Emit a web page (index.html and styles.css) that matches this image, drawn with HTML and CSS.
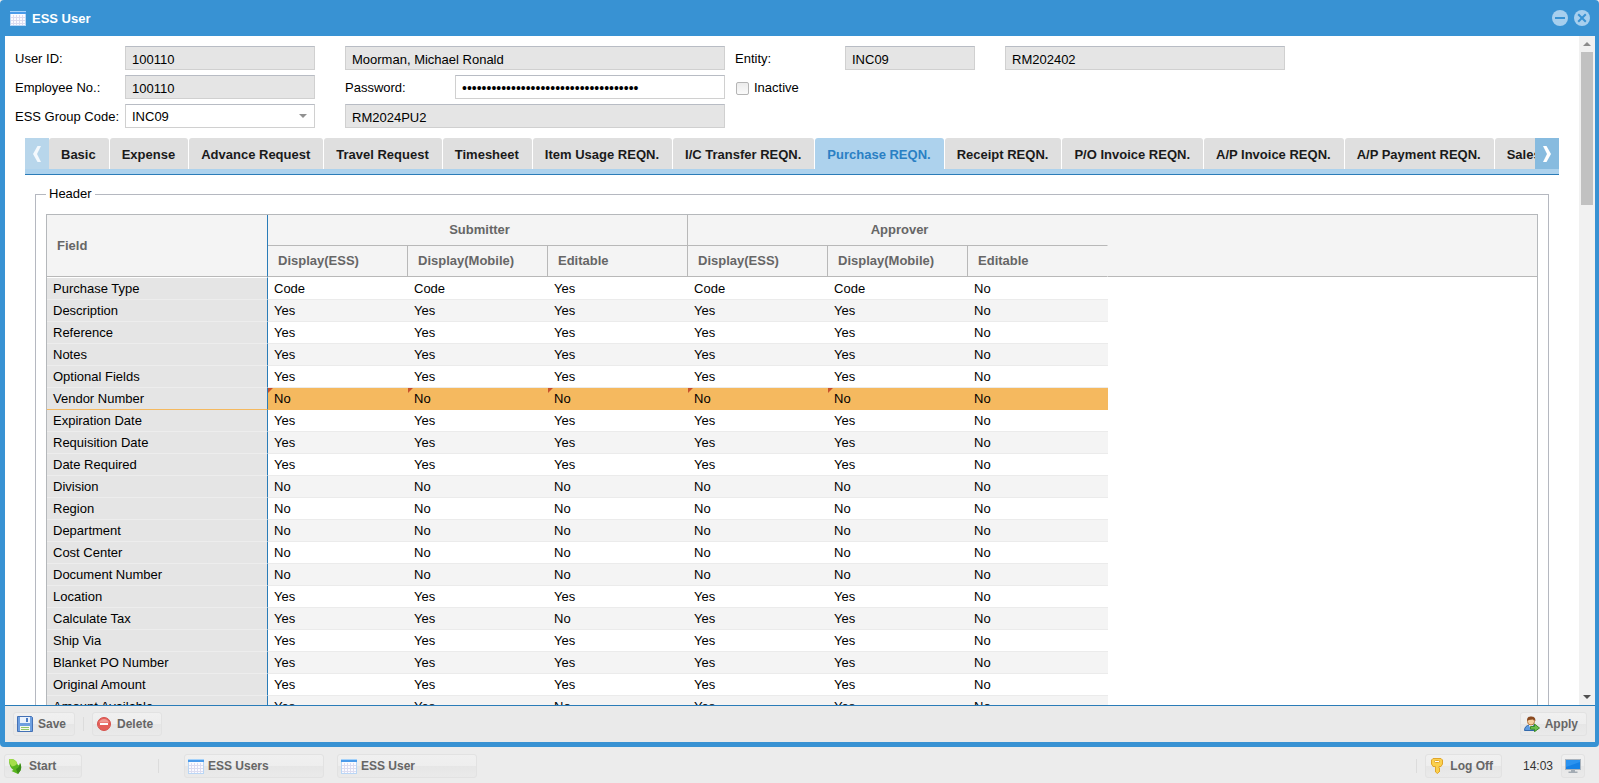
FILE: index.html
```html
<!DOCTYPE html>
<html lang="en">
<head>
    <meta charset="UTF-8">
    <meta name="viewport" content="width=device-width, initial-scale=1.0">
    <title>ESS User</title>
    <link rel="stylesheet" href="styles.css">
</head>
<body>

    <!-- Shared icons -->
    <svg class="sprite" aria-hidden="true">
        <symbol id="icon-grid" viewBox="0 0 16 16">
            <rect x="0.5" y="2.5" width="15" height="13" fill="#fbfbff" stroke="#b9d6f5"/>
            <path d="M3.500 5v10M6.500 5v10M9.500 5v10M12.500 5v10M1 7.500h14M1 10.500h14M1 13.500h14" stroke="#dcdcf0" fill="none"/>
            <rect x="0" y="1" width="16" height="3" fill="#4a9bea"/>
            <rect x="0" y="1" width="16" height="1" fill="#a5d2fa"/>
        </symbol>
    </svg>

    <main class="window">
        <header class="window-header">
            <svg class="icon"><use href="#icon-grid"/></svg>
            <h1>ESS User</h1>
            <button class="tool" aria-label="Minimize">
                <svg class="icon" viewBox="0 0 16 16"><circle cx="8" cy="8" r="8" fill="#a7cfee"/><path d="M3 8h10" stroke="#3892d3" stroke-width="2"/></svg>
            </button>
            <button class="tool" aria-label="Close">
                <svg class="icon" viewBox="0 0 16 16"><circle cx="8" cy="8" r="8" fill="#a7cfee"/><path d="M4.200 4.200l7.600 7.600M11.800 4.200l-7.600 7.600" stroke="#3892d3" stroke-width="2"/></svg>
            </button>
        </header>

        <div class="window-body">
            <div class="content">
                <form class="user-form">
                    <div class="form-row">
                        <label for="user-id">User ID:</label>
                        <input class="code" id="user-id" type="text" value="100110" readonly>
                        <input class="name spaced" type="text" value="Moorman, Michael Ronald" aria-label="User name" readonly>
                        <label class="third" for="entity">Entity:</label>
                        <input class="entity" id="entity" type="text" value="INC09" readonly>
                        <input class="entity-name spaced" type="text" value="RM202402" aria-label="Entity name" readonly>
                    </div>
                    <div class="form-row">
                        <label for="employee-no">Employee No.:</label>
                        <input class="code" id="employee-no" type="text" value="100110" readonly>
                        <label class="spaced" for="password">Password:</label>
                        <input class="password" id="password" type="password" value="abcdefghijklmnopqrstuvwxyz0123456789">
                        <label class="third check"><input type="checkbox">Inactive</label>
                    </div>
                    <div class="form-row">
                        <label for="group-code">ESS Group Code:</label>
                        <span class="combo">
                            <select class="code" id="group-code"><option>INC09</option></select>
                            <svg class="combo-arrow" viewBox="0 0 8 4"><path d="M0 0h8L4 4z" fill="#919191"/></svg>
                        </span>
                        <input class="name spaced" type="text" value="RM2024PU2" aria-label="Group name" readonly>
                    </div>
                </form>

                <nav class="tab-bar">
                    <button class="scroller disabled" aria-label="Scroll left"><svg viewBox="0 0 10 16"><path d="M9 0L5.500 0 1 8l4.500 8H9L5 8z" fill="#f4f9fd"/></svg></button>
                    <div class="tabs">
                        <button class="tab">Basic</button>
                        <button class="tab">Expense</button>
                        <button class="tab">Advance Request</button>
                        <button class="tab">Travel Request</button>
                        <button class="tab">Timesheet</button>
                        <button class="tab">Item Usage REQN.</button>
                        <button class="tab">I/C Transfer REQN.</button>
                        <button class="tab active">Purchase REQN.</button>
                        <button class="tab">Receipt REQN.</button>
                        <button class="tab">P/O Invoice REQN.</button>
                        <button class="tab">A/P Invoice REQN.</button>
                        <button class="tab">A/P Payment REQN.</button>
                        <button class="tab">Sales</button>
                    </div>
                    <button class="scroller" aria-label="Scroll right"><svg viewBox="0 0 10 16"><path d="M1 0L4.500 0 9 8l-4.500 8H1L5 8z" fill="#fff"/></svg></button>
                </nav>

                <fieldset class="section">
                    <legend>Header</legend>
                    <table class="grid">
                        <colgroup>
                            <col class="col-field">
                            <col class="col-data" span="6">
                            <col>
                        </colgroup>
                        <thead>
                            <tr>
                                <th class="field" rowspan="2">Field</th>
                                <th class="group" colspan="3">Submitter</th>
                                <th class="group last" colspan="3">Approver</th>
                                <td class="filler" rowspan="2"></td>
                            </tr>
                            <tr>
                                <th>Display(ESS)</th>
                                <th>Display(Mobile)</th>
                                <th>Editable</th>
                                <th>Display(ESS)</th>
                                <th>Display(Mobile)</th>
                                <th class="last">Editable</th>
                            </tr>
                        </thead>
                        <tbody id="field-rows"></tbody>
                    </table>
                </fieldset>
            </div>

            <div class="scrollbar">
                <svg viewBox="0 0 8 4"><path d="M0 4h8L4 0z" fill="#8b8b8b"/></svg>
                <div class="track"><div class="thumb"></div></div>
                <svg viewBox="0 0 8 4"><path d="M0 0h8L4 4z" fill="#505050"/></svg>
            </div>
        </div>

        <div class="toolbar">
            <button class="btn">
                <svg class="icon" viewBox="0 0 16 16">
                    <path d="M.5.5h14l1 1v14H.5z" fill="#6d9fe0" stroke="#4471b5"/>
                    <rect x="3" y="1" width="10" height="6" fill="#eaf2fc"/>
                    <path d="M9 2h2v4H9z" fill="#4c7cc4"/>
                    <rect x="3" y="10" width="10" height="5" fill="#f4f9ee"/>
                    <path d="M4 11.500h8M4 13.500h8" stroke="#8fc66b"/>
                </svg>
                Save
            </button>
            <span class="separator"></span>
            <button class="btn">
                <svg class="icon" viewBox="0 0 16 16">
                    <circle cx="8" cy="8" r="6.500" fill="#e4605a" stroke="#d5524c"/>
                    <path d="M3 6.500a5.300 5.300 0 0 1 10 0z" fill="#f09a94"/>
                    <rect x="4" y="7" width="8" height="2" fill="#fff"/>
                </svg>
                Delete
            </button>
            <button class="btn push">
                <svg class="icon" viewBox="0 0 16 16">
                    <path d="M.5 14.500c0-3.500 2-5 5-5.500h4l2 1.500v4z" fill="#5d9be0" stroke="#3369ab"/>
                    <path d="M5 9l2 5 2-5z" fill="#fff"/>
                    <circle cx="7" cy="5.500" r="3.500" fill="#f6cfa0" stroke="#b5793f"/>
                    <path d="M3 5C3 1 5 .5 7 .5S11.500 1 11.500 5L9 3.500 4.500 4z" fill="#8a4a20"/>
                    <path d="M6.500 10.500h4v-2.500l5 4-5 3.700v-2.500h-4z" fill="#6fc04c" stroke="#3c8a28"/>
                </svg>
                Apply
            </button>
        </div>
    </main>

    <footer class="taskbar">
        <button class="btn start">
            <svg class="icon" viewBox="0 0 16 16">
                <path d="M1 1c5 0 7 1.500 8 4 .5 1.500 1 2 2 2.500L12 5c1.500 3 1.500 5 .5 7.500L10 16l-6.500-3 2-1C2 10 1 6 1 1z" fill="#58b51d"/>
                <path d="M1 1c5 0 7 1.500 8 4 0 2-2 3-5 3.500C2 6.500 1 4 1 1z" fill="#a4de4a"/>
                <path d="M8 11c2.500-1 4-3 4-6 1.500 3 1.500 5 .5 7.500L10 16z" fill="#3b8c18"/>
            </svg>
            Start
        </button>
        <span class="separator start-sep"></span>
        <div class="tasks">
            <button class="btn task"><svg class="icon"><use href="#icon-grid"/></svg>ESS Users</button>
            <button class="btn task"><svg class="icon"><use href="#icon-grid"/></svg>ESS User</button>
        </div>
        <span class="separator"></span>
        <button class="btn log-off">
            <svg class="icon" viewBox="0 0 16 16">
                <path d="M4 .5h8l1.500 1.500v4L12 8.500h-2V10l1 1-1 1 1 1-2.500 2.500-2-1.500V8.500H4L2.500 6V2z" fill="#fbd04d" stroke="#e0a52c"/>
                <rect x="5.500" y="2.500" width="5" height="2" rx="1" fill="#fff" stroke="#e0a52c"/>
            </svg>
            Log Off
        </button>
        <time class="clock">14:03</time>
        <button class="btn" aria-label="Show desktop">
            <svg class="icon" viewBox="0 0 16 16">
                <rect x=".5" y="1.500" width="15" height="10" fill="#2b93f0" stroke="#a9b3bd"/>
                <path d="M1 9L15 4v7H1z" fill="#1581e6"/>
                <path d="M6 12h4v1.500h2.500V15h-9v-1.500H6z" fill="#a3abb3"/>
            </svg>
        </button>
    </footer>

    <script>
        // Field name followed by submitter and approver settings
        const fields = [
            ['Purchase Type', 'Code', 'Code', 'Yes', 'Code', 'Code', 'No'],
            ['Description', 'Yes', 'Yes', 'Yes', 'Yes', 'Yes', 'No'],
            ['Reference', 'Yes', 'Yes', 'Yes', 'Yes', 'Yes', 'No'],
            ['Notes', 'Yes', 'Yes', 'Yes', 'Yes', 'Yes', 'No'],
            ['Optional Fields', 'Yes', 'Yes', 'Yes', 'Yes', 'Yes', 'No'],
            ['Vendor Number', 'No', 'No', 'No', 'No', 'No', 'No'],
            ['Expiration Date', 'Yes', 'Yes', 'Yes', 'Yes', 'Yes', 'No'],
            ['Requisition Date', 'Yes', 'Yes', 'Yes', 'Yes', 'Yes', 'No'],
            ['Date Required', 'Yes', 'Yes', 'Yes', 'Yes', 'Yes', 'No'],
            ['Division', 'No', 'No', 'No', 'No', 'No', 'No'],
            ['Region', 'No', 'No', 'No', 'No', 'No', 'No'],
            ['Department', 'No', 'No', 'No', 'No', 'No', 'No'],
            ['Cost Center', 'No', 'No', 'No', 'No', 'No', 'No'],
            ['Document Number', 'No', 'No', 'No', 'No', 'No', 'No'],
            ['Location', 'Yes', 'Yes', 'Yes', 'Yes', 'Yes', 'No'],
            ['Calculate Tax', 'Yes', 'Yes', 'No', 'Yes', 'Yes', 'No'],
            ['Ship Via', 'Yes', 'Yes', 'Yes', 'Yes', 'Yes', 'No'],
            ['Blanket PO Number', 'Yes', 'Yes', 'Yes', 'Yes', 'Yes', 'No'],
            ['Original Amount', 'Yes', 'Yes', 'Yes', 'Yes', 'Yes', 'No'],
            ['Amount Available', 'Yes', 'Yes', 'No', 'Yes', 'Yes', 'No']
        ];
        const selectedField = 'Vendor Number';
        const tbody = document.getElementById('field-rows');

        fields.forEach(field => {
            const row = tbody.insertRow();
            const selected = field[0] === selectedField;
            if (selected) {
                row.className = 'selected';
            }
            field.forEach((value, i) => {
                const cell = row.insertCell();
                cell.textContent = value;
                // changed cells get a red corner
                if (selected && i > 0 && i < 6) {
                    cell.className = 'dirty';
                }
            });
            row.insertCell().className = 'filler';
        });
    </script>
</body>
</html>
```

FILE: styles.css
```css
* {
    box-sizing: border-box;
}

body {
    margin: 0;
    height: 100vh;
    display: flex;
    flex-direction: column;
    background-color: #ececec;
    color: #000;
    font-family: "Liberation Sans", Arial, sans-serif;
    font-size: 13px;
    line-height: 16px;
    overflow: hidden;
}

button,
input,
select {
    font: inherit;
    color: inherit;
}

button {
    margin: 0;
    padding: 0;
    border: none;
    cursor: pointer;
}

.sprite {
    display: none;
}

.icon {
    width: 16px;
    height: 16px;
    flex: none;
}

/* Window */
.window {
    flex: 1;
    min-height: 0;
    display: flex;
    flex-direction: column;
    padding: 0 4px 5px 5px;
    background-color: #3892d3;
    border-radius: 4px;
}

.window-header {
    display: flex;
    align-items: center;
    gap: 6px;
    height: 36px;
    padding: 0 5px;
    color: #fff;
}

.window-header h1 {
    flex: 1;
    margin: 0;
    padding-top: 1px;
    font-size: 13px;
}

.tool {
    display: flex;
    background: none;
}

.window-body {
    flex: 1;
    min-height: 0;
    display: flex;
    background-color: #fff;
}

.content {
    flex: 1;
    min-width: 0;
    overflow: hidden;
    padding: 10px 20px 0;
}

/* Form */
.user-form {
    display: flex;
    flex-direction: column;
    gap: 5px;
    margin-left: -10px;
}

.form-row {
    display: flex;
    align-items: center;
    height: 24px;
}

.form-row label {
    width: 110px;
    padding-top: 2px;
}

.form-row input:not([type="checkbox"]),
.form-row select {
    height: 24px;
    padding: 2px 6px 0;
    border: 1px solid #d0d0d0;
    border-top-color: #b8bcc4;
    border-radius: 0;
    background-color: #fff;
    outline: none;
}

.form-row input[readonly] {
    background-color: #e5e5e5;
}

.form-row .spaced {
    margin-left: 30px;
}

.form-row .third {
    margin-left: 10px;
}

.code {
    width: 190px;
}

.name {
    width: 380px;
}

.form-row .password {
    width: 270px;
    font-size: 14px;
}

.entity {
    width: 130px;
}

.entity-name {
    width: 280px;
}

.check {
    display: flex;
    align-items: center;
    gap: 5px;
}

.check input {
    appearance: none;
    width: 13px;
    height: 13px;
    margin: 0 0 0 1px;
    border: 1px solid #b5b5b5;
    border-radius: 2px;
    background: linear-gradient(#ececec, #fafafa);
}

.combo {
    position: relative;
    display: flex;
}

.combo select {
    appearance: none;
}

.combo-arrow {
    position: absolute;
    top: 10px;
    right: 8px;
    width: 8px;
    height: 4px;
    pointer-events: none;
}

/* Tabs */
.tab-bar {
    display: flex;
    height: 37px;
    margin-top: 10px;
    padding-bottom: 5px;
    background-color: #add2ed;
    border-bottom: 1px solid #2a7cb8;
}

.tabs {
    flex: 1;
    display: flex;
    gap: 1px;
    overflow: hidden;
    background-color: #fff;
}

.tab {
    flex: none;
    padding: 2px 13px 0 12px;
    border-radius: 3px 3px 0 0;
    background-color: #dfdfdf;
    color: #1a1a1a;
    font-weight: bold;
    white-space: nowrap;
}

.tab.active {
    background-color: #add2ed;
    color: #2a80c4;
}

.scroller {
    flex: none;
    display: flex;
    align-items: center;
    justify-content: center;
    width: 24px;
    background-color: #87bbdf;
}

.scroller.disabled {
    background-color: #b8d6eb;
}

.scroller svg {
    width: 10px;
    height: 16px;
}

/* Grid */
.section {
    margin: 11px 10px 0;
    padding: 12px 10px 0;
    border: 1px solid #b5b8c0;
    border-bottom: none;
}

.section legend {
    padding: 0 3px;
}

.grid {
    width: 100%;
    table-layout: fixed;
    border-spacing: 0;
    border: 1px solid #b5b8bb;
    border-bottom: none;
}

.col-field {
    width: 221px;
}

.col-data {
    width: 140px;
}

.grid th {
    height: 31px;
    padding: 0 10px;
    border-right: 1px solid #b8b8b8;
    border-bottom: 1px solid #b8b8b8;
    background-color: #f4f4f4;
    color: #666;
    text-align: left;
}

.grid th.field {
    border-right-color: #2a7cb8;
}

.grid th.group {
    padding-left: 14px;
    text-align: center;
}

.grid th.last {
    border-right-color: #f4f4f4;
}

.grid thead .filler {
    border-bottom: 1px solid #b8b8b8;
    background-color: #f4f4f4;
}

.grid tbody td {
    height: 22px;
    padding: 0 6px;
    border-bottom: 1px solid #ebebeb;
}

.grid tbody tr:first-child td {
    height: 23px;
    border-top: 1px solid #fff;
}

.grid tbody tr:nth-child(even) td {
    background-color: #f4f4f4;
}

.grid tbody tr td:first-child,
.grid tbody tr:nth-child(even) td:first-child {
    border-right: 1px solid #2a7cb8;
    border-bottom-color: #ededed;
    background-color: #e5e5e5;
}

.grid tbody tr td.filler,
.grid tbody tr:nth-child(even) td.filler {
    border: none;
    background-color: #fff;
}

.grid tbody tr.selected td:not(:first-child):not(.filler) {
    border-bottom-color: #f5b95f;
    background-color: #f5b95f;
}

.grid tbody tr.selected:nth-child(n) td:first-child {
    border-bottom-color: #f5b95f;
}

.grid tbody tr.selected td.dirty:not(:first-child) {
    background-image: linear-gradient(135deg, #c8502a 3px, transparent 4px);
}

/* Scrollbar */
.scrollbar {
    display: flex;
    flex-direction: column;
    align-items: center;
    width: 16px;
    padding: 6px 2px;
    background-color: #f1f1f1;
}

.scrollbar svg {
    width: 8px;
    height: 4px;
}

.track {
    flex: 1;
    width: 100%;
    padding: 6px 0;
}

.thumb {
    height: 24%;
    background-color: #c1c1c1;
}

/* Toolbars */
.toolbar {
    display: flex;
    align-items: center;
    gap: 8px;
    height: 37px;
    padding: 0 8px;
    border-top: 1px solid #2a7cb8;
    background-color: #eaeaea;
}

.btn {
    display: flex;
    align-items: center;
    gap: 5px;
    height: 24px;
    padding: 0 8px 0 3px;
    border: 1px solid #e2e2e2;
    border-radius: 3px;
    background: linear-gradient(#f0f0f0 0, #eee 50%, #e6e6e6 50%, #eaeaea 100%);
    color: #666;
    font-size: 12px;
    font-weight: bold;
}

.btn.push {
    margin-left: auto;
}

.separator {
    width: 1px;
    height: 14px;
    background-color: #dcdcdc;
}

.taskbar {
    display: flex;
    align-items: center;
    gap: 8px;
    height: 36px;
    padding: 1px 14px 0 4px;
}

.start {
    width: 78px;
}

.start-sep {
    margin: 0 17px 0 68px;
}

.tasks {
    flex: 1;
    display: flex;
    gap: 13px;
}

.task {
    width: 140px;
    gap: 4px;
}

.clock {
    margin-left: 13px;
    color: #333;
    font-size: 12px;
}

.taskbar .btn:last-child {
    padding: 0 3px;
}
```
